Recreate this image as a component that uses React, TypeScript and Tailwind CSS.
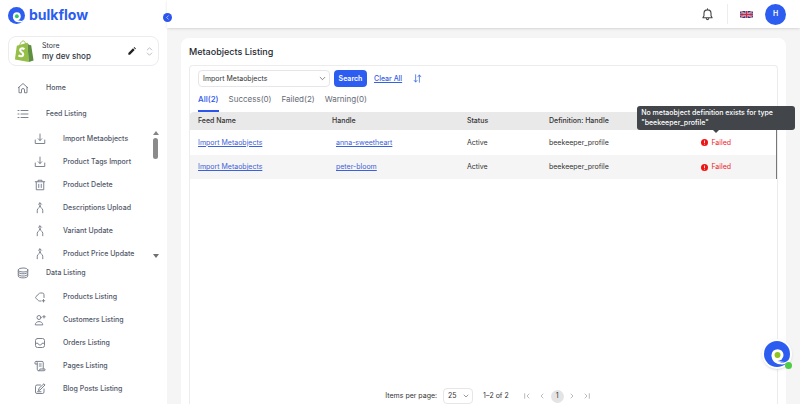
import React from "react";

type IconProps = { name: string; className?: string };

const shapes: Record<string, React.ReactNode> = {
  home: <path d="M2.500 11.500 12 3l9.500 8.500M4 10.500V21.500h5V16a3 3 0 0 1 6 0v5.500h5V10.500" />,
  list: <path d="M8 5h14M8 12h14M8 19h14M2 5h2M2 12h2M2 19h2" />,
  download: <path d="M12 2v13M8.500 11.500 12 15l3.500-3.500M2.500 14v7h19v-7" />,
  trash: <path d="M2.500 5.500h19M8 5V2.500h8V5M4.500 6v15.500h15V6M9.500 10.500v6.500M14.500 10.500v6.500" />,
  merge: <path d="M12 2v7M9 4.500l3-3 3 3M12 8c0 4.500-5.500 3.500-5.500 8.500v5M12 8c0 4.500 5.500 3.500 5.500 8.500v5" />,
  database: (
    <>
      <ellipse cx="12" cy="6" rx="9.500" ry="4" />
      <path d="M2.500 6v12c0 5 19 5 19 0V6M2.500 10c0 5 19 5 19 0M2.500 14.500c0 5 19 5 19 0" />
    </>
  ),
  tag: (
    <>
      <path d="M20 13V7.500a3.500 3.500 0 0 0-3.500-3.500h-4a3 3 0 0 0-2 1L4 11a2.500 2.500 0 0 0 0 3.500l4.500 4.500a3 3 0 0 0 2 1H14" />
      <path d="M19 17v5M16.500 19.500h5" />
    </>
  ),
  user: (
    <>
      <circle cx="10" cy="7" r="4" />
      <path d="M2.500 21c0-8 15-8 15 0zM20 3v5M17.500 5.500h5" />
    </>
  ),
  inbox: (
    <>
      <rect x="3" y="3" width="18" height="18" rx="4" />
      <path d="M3 12.500h5c0 4.500 8 4.500 8 0h5" />
    </>
  ),
  scroll: (
    <path d="M6.500 8H2V5a2.250 2.250 0 0 1 4.500 0v13.500a3 3 0 0 0 3 3H20a2 2 0 0 0 2-2V18H11.500v1.500a2 2 0 0 1-2 2M4.500 2.800H16a2.500 2.500 0 0 1 2.500 2.500V18M10.500 8h4M10.500 12h4" />
  ),
  edit: <path d="M13 4H6a3 3 0 0 0-3 3v11a3 3 0 0 0 3 3h11a3 3 0 0 0 3-3v-6M9 14.500l1-4L20 1.500l2 2.500-9.500 9.500zM7 17.500h7" />,
  bell: <path d="M3.500 18h17l-2-3.500V10a6.500 6.500 0 0 0-13 0v4.500zM9.500 18a2.500 3.500 0 0 0 5 0M12 1.500v2" />,
  down: <path d="m4 8 8 8 8-8" />,
  prev: <path d="m15 6-6 6 6 6" />,
  next: <path d="m9 6 6 6-6 6" />,
  first: <path d="M5 5v14M18 6l-6 6 6 6" />,
  last: <path d="M19 5v14M6 6l6 6-6 6" />,
  updown: <path d="m6 8 6-6 6 6M6 16l6 6 6-6" />,
  sort: <path d="M7 2v19M3 17l4 4.500 4-4.500M17 22V3M13 7.500 17 2.500l4 5" />,
};

function Icon({ name, className = "size-3" }: IconProps) {
  return (
    <svg viewBox="0 0 24 24" fill="none" stroke="currentColor" strokeWidth="2" strokeLinecap="round" strokeLinejoin="round" className={`shrink-0 ${className}`} aria-hidden="true">
      {shapes[name]}
    </svg>
  );
}

function Swirl({ className, dot }: { className: string; dot: string }) {
  return (
    <svg viewBox="0 0 48 48" className={className} aria-hidden="true">
      <circle cx="24" cy="24" r="24" fill="#2c5df0" />
      <circle cx="25" cy="26" r="11" fill="#fff" />
      <path fill="#fff" d="M14 26c0 10 6 16 15 17 7 1 13-1 18-5l-3-5c-5 4-11 6-18 4z" />
      <path fill="#2c5df0" d="M25 37c5 3 13 2 18-6l2 4c-6 6-14 6-20 2z" />
      <circle cx="25" cy="26" r="5.500" fill={dot} />
    </svg>
  );
}

function ShopBag() {
  return (
    <svg viewBox="0 0 20 23" className="h-[22px] w-5 shrink-0" aria-hidden="true">
      <path fill="#95bf47" d="m2.500 6 11-3 1.500 20L.5 20.500z" />
      <path fill="#5e8e3e" d="m13.500 3 1.500 20 5-1.500L17.500 5.500 15 5z" />
      <path fill="none" stroke="#95bf47" strokeWidth="1" d="M5.500 6C6 2 9 0 10.500 1.500c1 1 1.200 2.500 1 4" />
      <path fill="none" stroke="#fff" strokeWidth="2.200" d="M10.500 9.500C8 8 5.500 9 6 11c.4 1.600 3.400 1.800 3.200 4-.2 2.400-3 2.400-5 1" />
    </svg>
  );
}

const feeds = [
  ["download", "Import Metaobjects"],
  ["download", "Product Tags Import"],
  ["trash", "Product Delete"],
  ["merge", "Descriptions Upload"],
  ["merge", "Variant Update"],
  ["merge", "Product Price Update"],
];

const listings = [
  ["tag", "Products Listing"],
  ["user", "Customers Listing"],
  ["inbox", "Orders Listing"],
  ["scroll", "Pages Listing"],
  ["edit", "Blog Posts Listing"],
];

function NavLink({ icon, label, className }: { icon: string; label: string; className: string }) {
  return (
    <a href="#" className={`flex items-center ${className}`}>
      <Icon name={icon} className="size-3 text-[#7d8290]" />
      {label}
    </a>
  );
}

function SubList({ items }: { items: string[][] }) {
  return (
    <ul className="flex-1">
      {items.map(([icon, label]) => (
        <li key={label}>
          <NavLink icon={icon} label={label} className="h-[23px] gap-[17px] pl-[34px]" />
        </li>
      ))}
    </ul>
  );
}

function Sidebar() {
  return (
    <aside className="w-[167px] shrink-0 bg-white">
      <a href="#" className="flex h-7 items-center gap-1 pt-[2px] pl-2 text-[14px] leading-4 font-bold text-[#2c5df0]">
        <Swirl className="size-[17px]" dot="#35c46a" />
        bulkflow
      </a>
      <div className="mx-2 mt-2 flex h-[30px] items-center rounded-lg border border-[#ececf0] pr-1 pl-[5px]">
        <ShopBag />
        <div className="ml-2 flex-1 text-[#30343f]">
          <p className="text-[7px] leading-[11px]">Store</p>
          <p className="text-[8px] leading-[11px] font-medium">my dev shop</p>
        </div>
        <button aria-label="Edit store" className="mr-[9px]">
          <svg viewBox="0 0 24 24" className="size-2" fill="#202124" aria-hidden="true">
            <path d="M1 23v-5L15 4l5 5L6 23zM17 2l2-2 5 5-2 2z" />
          </svg>
        </button>
        <button aria-label="Switch store" className="text-[#a4a8b1]">
          <Icon name="updown" className="size-[9px]" />
        </button>
      </div>
      <nav className="pt-2 text-[7px] leading-3 font-medium text-[#4f5667]">
        <NavLink icon="home" label="Home" className="h-[27px] gap-[17px] pl-[17px]" />
        <NavLink icon="list" label="Feed Listing" className="h-[26px] gap-[17px] pl-[17px]" />
        <div className="flex">
          <SubList items={feeds} />
          <div className="mr-[9px] flex w-[5px] flex-col items-center pt-1 pb-[7px]" aria-hidden="true">
            <svg viewBox="0 0 6 4" className="h-1 w-[6px]" fill="#858585"><path d="M0 4 3 0l3 4z" /></svg>
            <span className="mt-[3px] h-[21px] w-[5px] rounded-full bg-[#8b8b8b]" />
            <svg viewBox="0 0 6 4" className="mt-auto h-1 w-[6px]" fill="#707070"><path d="m0 0 3 4 3-4z" /></svg>
          </div>
        </div>
        <NavLink icon="database" label="Data Listing" className="h-4 gap-[17px] pl-[17px]" />
        <div className="pt-1">
          <SubList items={listings} />
        </div>
      </nav>
    </aside>
  );
}

function Header() {
  return (
    <header className="relative flex h-7 shrink-0 items-center justify-end bg-white pr-[14px] shadow-sm">
      <button aria-label="Collapse menu" className="absolute top-[13px] -left-1 flex size-[9px] items-center justify-center rounded-full bg-[#2c55ee] text-white">
        <Icon name="prev" className="size-[7px]" />
      </button>
      <button aria-label="Notifications" className="text-[#444]">
        <Icon name="bell" className="size-[13px]" />
      </button>
      <span className="mr-3 ml-[13px] h-5 w-px bg-[#ededed]" />
      <button aria-label="Language: English">
        <svg viewBox="0 0 26 14" className="h-[7px] w-[13px]" aria-hidden="true">
          <path fill="#2b3b83" d="M0 0h26v14H0z" />
          <path stroke="#eee" strokeWidth="2.400" d="m0 0 26 14M26 0 0 14" />
          <path stroke="#c8294a" strokeWidth="1.200" d="m0 0 26 14M26 0 0 14" />
          <path stroke="#eee" strokeWidth="4.400" d="M13 0v14M0 7h26" />
          <path stroke="#c8294a" strokeWidth="3" d="M13 0v14M0 7h26" />
        </svg>
      </button>
      <button className="ml-3 size-[21px] rounded-full bg-[#2c5df0] text-[7px] leading-3 font-semibold text-white">H</button>
    </header>
  );
}

function Failed({ note }: { note?: string }) {
  return (
    <span className="relative inline-flex h-4 items-center gap-[3px] align-middle text-[#ed1c24]">
      <svg viewBox="0 0 14 14" className="size-[7px]" aria-hidden="true">
        <circle cx="7" cy="7" r="7" fill="#ee1515" />
        <path stroke="#fff" strokeWidth="1.600" d="M7 3v5M7 9.500v1.700" />
      </svg>
      Failed
      {note && (
        <span role="tooltip" className="absolute bottom-full left-1/2 z-10 mb-[5px] w-[158px] -translate-x-1/2 rounded-[3px] bg-[#42454a] px-1 py-[2px] text-left text-[7px] leading-[10px] font-medium text-white">
          {note}
          <svg viewBox="0 0 6 3" className="absolute top-full left-1/2 h-[3px] w-[6px] -translate-x-1/2" fill="#42454a" aria-hidden="true">
            <path d="M0 0h6L3 3z" />
          </svg>
        </span>
      )}
    </span>
  );
}

const rows = [
  { handle: "anna-sweetheart", note: 'No metaobject definition exists for type "beekeeper_profile"' },
  { handle: "peter-bloom", note: undefined },
];

function ResultTable() {
  return (
    <table className="w-full table-fixed text-left text-[7px] leading-3 text-[#333]">
      <colgroup>
        <col className="w-[134px]" />
        <col className="w-[23%]" />
        <col className="w-[14%]" />
        <col className="w-[19%]" />
        <col />
      </colgroup>
      <thead>
        <tr className="h-[18px] bg-[#e9e9e9]">
          <th className="rounded-tl pl-2 font-medium">Feed Name</th>
          <th className="pl-2 font-medium">Handle</th>
          <th className="pl-2 font-medium">Status</th>
          <th className="pl-2 font-medium">Definition: Handle</th>
          <th className="rounded-tr"></th>
        </tr>
      </thead>
      <tbody className="border-r border-[#777]">
        {rows.map((row) => (
          <tr key={row.handle} className="h-[25px] even:h-6 even:bg-[#f5f5f5]">
            <td className="pl-2"><a href="#" className="text-[#3d61d8] underline">Import Metaobjects</a></td>
            <td className="pl-3"><a href="#" className="text-[#3d61d8] underline">{row.handle}</a></td>
            <td className="pl-2">Active</td>
            <td className="pl-2">beekeeper_profile</td>
            <td className="pl-1 text-center"><Failed note={row.note} /></td>
          </tr>
        ))}
      </tbody>
    </table>
  );
}

function Filters() {
  return (
    <form className="flex items-center pt-1 pl-2 text-[7px] leading-3">
      <div className="relative">
        <select aria-label="Feed" className="h-[17px] w-[132px] appearance-none rounded border border-[#e6e6e9] bg-white pl-1 text-[#333]">
          <option>Import Metaobjects</option>
        </select>
        <Icon name="down" className="pointer-events-none absolute top-[5px] right-1 size-[7px] text-[#333]" />
      </div>
      <button type="button" className="ml-1 h-[17px] w-[33px] rounded bg-[#2c5df0] font-semibold text-white">Search</button>
      <a href="#" className="ml-[7px] font-medium text-[#3560df] underline">Clear All</a>
      <button type="button" aria-label="Sort" className="ml-[11px] text-[#3560df]">
        <Icon name="sort" className="size-[9px]" />
      </button>
    </form>
  );
}

function Tabs() {
  return (
    <div role="tablist" className="flex h-[25px] gap-[10px] pl-2 text-[8px] leading-3 text-[#666b75]">
      <button role="tab" aria-selected="true" className="border-b-2 border-[#2c55ee] font-medium text-[#2c55ee]">All(2)</button>
      <button role="tab" className="border-b-2 border-transparent">Success(0)</button>
      <button role="tab" className="border-b-2 border-transparent">Failed(2)</button>
      <button role="tab" className="border-b-2 border-transparent">Warning(0)</button>
    </div>
  );
}

function PageButton({ label, icon }: { label: string; icon: string }) {
  return (
    <button aria-label={label} className="flex size-[13px] items-center justify-center">
      <Icon name={icon} className="size-2" />
    </button>
  );
}

function Pagination() {
  return (
    <footer className="mt-auto flex h-4 items-center justify-center pl-3 text-[7px] leading-3 text-[#333]">
      <label htmlFor="page-size">Items per page:</label>
      <div className="relative ml-[6px]">
        <select id="page-size" className="h-4 w-[30px] appearance-none rounded border border-[#e6e6e9] bg-white pl-1">
          <option>25</option>
        </select>
        <Icon name="down" className="pointer-events-none absolute top-[5px] right-1 size-[6px]" />
      </div>
      <span className="mr-3 ml-[10px]">1–2 of 2</span>
      <div className="flex items-center gap-[2px] text-[#999]">
        <PageButton label="First page" icon="first" />
        <PageButton label="Previous page" icon="prev" />
        <button className="size-[13px] rounded-full bg-[#e4e4e4] text-[#333]">1</button>
        <PageButton label="Next page" icon="next" />
        <PageButton label="Last page" icon="last" />
      </div>
    </footer>
  );
}

export default function App() {
  return (
    <div className="flex h-screen overflow-hidden bg-[#f5f5f5] font-['Inter',sans-serif]">
      <Sidebar />
      <div className="flex min-w-0 flex-1 flex-col">
        <Header />
        <main className="mx-[14px] mt-[10px] flex flex-1 flex-col rounded-t-lg bg-white px-2">
          <h1 className="flex h-[27px] items-center text-[9px] font-medium text-[#25282f]">Metaobjects Listing</h1>
          <section className="flex flex-1 flex-col rounded-t border border-b-0 border-[#ececec]">
            <Filters />
            <Tabs />
            <ResultTable />
            <Pagination />
          </section>
        </main>
      </div>
      <button aria-label="Open chat" className="fixed right-2 bottom-[35px] flex size-[30px] items-center justify-center rounded-full bg-white shadow-sm">
        <Swirl className="size-[26px]" dot="#8fc31f" />
        <span className="absolute right-0 bottom-0 size-[7px] rounded-full bg-[#4dcc45]" />
      </button>
    </div>
  );
}
